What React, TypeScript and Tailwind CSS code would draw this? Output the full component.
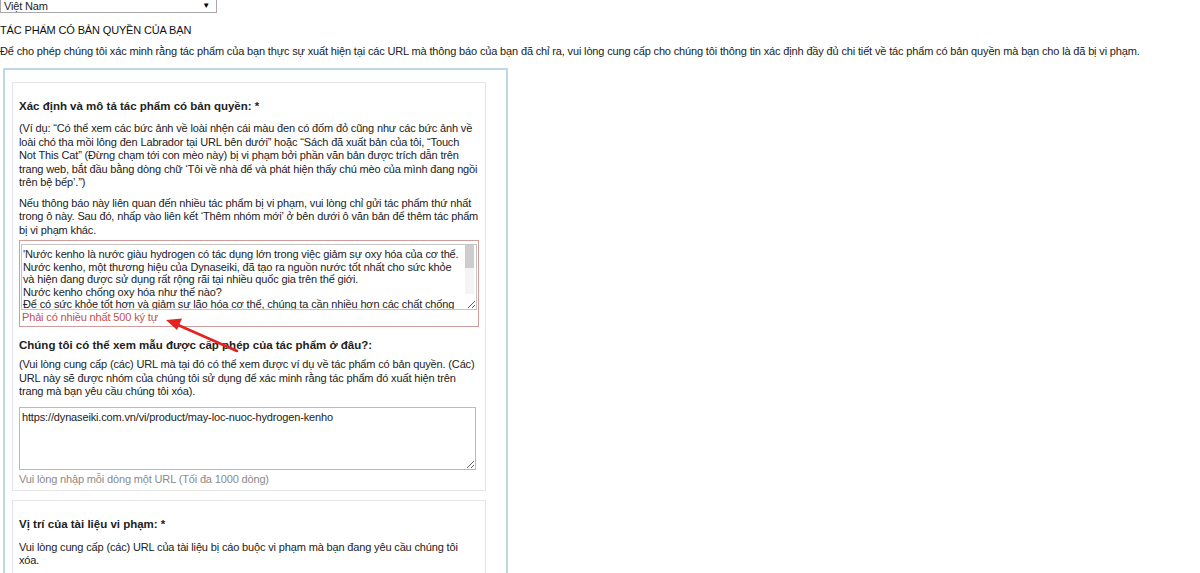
import { useState } from "react";

const TEXT_1 =
  "'Nước kenho là nước giàu hydrogen có tác dụng lớn trong việc giảm sự oxy hóa của cơ thể.\nNước kenho, một thương hiệu của Dynaseiki, đã tạo ra nguồn nước tốt nhất cho sức khỏe và hiện đang được sử dụng rất rộng rãi tại nhiều quốc gia trên thế giới.\nNước kenho chống oxy hóa như thế nào?\nĐể có sức khỏe tốt hơn và giảm sự lão hóa cơ thể, chúng ta cần nhiều hơn các chất chống oxy hóa. Hydrogen là chất chống oxy hóa tự nhiên và an toàn nhất.";

function RedArrow() {
  return (
    <svg
      className="absolute left-0 top-0 pointer-events-none"
      width="300"
      height="400"
      viewBox="0 0 300 400"
    >
      <line x1="237" y1="351" x2="178" y2="325" stroke="#e3231f" strokeWidth="2.6" strokeLinecap="round" />
      <polygon points="166,320 182,318.5 177,330" fill="#e3231f" />
    </svg>
  );
}

export default function App() {
  const [desc, setDesc] = useState(TEXT_1);
  const [urls, setUrls] = useState("https://dynaseiki.com.vn/vi/product/may-loc-nuoc-hydrogen-kenho");

  return (
    <div className="relative min-h-[573px] bg-white text-[11px] tracking-[-0.15px] text-[#222] font-['Liberation_Sans',Arial,sans-serif] overflow-hidden">
      {/* Country select */}
      <div className="w-[217px] h-[13px] border border-t-0 border-[#a9a9a9] bg-white flex items-center justify-between pl-[3px] pr-[6px]">
        <span className="leading-[12px]">Việt Nam</span>
        <span className="text-[8px] leading-[12px] text-black">▼</span>
      </div>

      <h3 className="mt-[10px] leading-[14px] text-[#111]">TÁC PHẨM CÓ BẢN QUYỀN CỦA BẠN</h3>
      <p className="mt-[7px] leading-[14px] whitespace-nowrap">
        Để cho phép chúng tôi xác minh rằng tác phẩm của bạn thực sự xuất hiện tại các URL mà thông báo của bạn đã chỉ ra, vui lòng cung cấp cho chúng tôi thông tin xác định đầy đủ chi tiết về tác phẩm có bản quyền mà bạn cho là đã bị vi phạm.
      </p>

      {/* Outer bordered panel */}
      <div className="ml-[3px] mt-[10px] w-[505px] border-2 border-b-0 border-[#bcd8e5] pl-[7px] pt-[12px] pb-[40px]">
        {/* Card 1 */}
        <div className="w-[474px] border border-[#e6e6e6] px-[6px] pt-[16px] pb-[4px]">
          <div className="font-bold text-[11.5px] tracking-normal leading-[14px] text-[#222]">Xác định và mô tả tác phẩm có bản quyền: *</div>
          <p className="mt-[9px] leading-[13.5px]">
            (Ví dụ: “Có thể xem các bức ảnh về loài nhện cái màu đen có đốm đỏ cũng như các bức ảnh về
            <br />
            loài chó tha mồi lông đen Labrador tại URL bên dưới” hoặc “Sách đã xuất bản của tôi, “Touch
            <br />
            Not This Cat” (Đừng chạm tới con mèo này) bị vi phạm bởi phần văn bản được trích dẫn trên
            <br />
            trang web, bắt đầu bằng dòng chữ ‘Tôi về nhà để và phát hiện thấy chú mèo của mình đang ngồi
            <br />
            trên bệ bếp’.”)
          </p>
          <p className="mt-[7px] leading-[13.5px]">
            Nếu thông báo này liên quan đến nhiều tác phẩm bị vi phạm, vui lòng chỉ gửi tác phẩm thứ nhất trong ô này. Sau đó, nhấp vào liên kết ‘Thêm nhóm mới’ ở bên dưới ô văn bản để thêm tác phẩm bị vi phạm khác.
          </p>

          {/* Error-state field */}
          <div className="mt-[3px] w-[460px] border border-[#d09d9d] px-[1px] pt-[3px] pb-[2px]">
            <div className="relative">
              <textarea
                value={desc}
                onChange={(e) => setDesc(e.target.value)}
                className="block w-[456px] h-[66px] border border-[#c4c4c4] pl-[1px] pr-[14px] pt-[3px] leading-[12.6px] text-[11px] tracking-[-0.15px] text-[#222] overflow-hidden outline-none font-['Liberation_Sans',Arial,sans-serif]"
              />
              {/* scrollbar */}
              <div className="absolute right-[3px] top-[1px] bottom-[16px] w-[9px] bg-[#f4f4f4]">
                <div className="h-[23px] bg-[#cdcdcd]" />
              </div>
            </div>
            <div className="leading-[14px] pl-[1px] text-[#c0504d]">Phải có nhiều nhất 500 ký tự</div>
          </div>

          <div className="mt-[11px] font-bold text-[11.5px] tracking-normal leading-[14px] text-[#222]">
            Chúng tôi có thể xem mẫu được cấp phép của tác phẩm ở đâu?:
          </div>
          <p className="mt-[6px] leading-[13.5px]">
            (Vui lòng cung cấp (các) URL mà tại đó có thể xem được ví dụ về tác phẩm có bản quyền. (Các) URL này sẽ được nhóm của chúng tôi sử dụng để xác minh rằng tác phẩm đó xuất hiện trên trang mà bạn yêu cầu chúng tôi xóa).
          </p>
          <textarea
            value={urls}
            onChange={(e) => setUrls(e.target.value)}
            className="mt-[8px] block w-[457px] h-[63px] border border-[#b9b9b9] px-[2px] pt-[3px] leading-[13px] text-[11px] tracking-[-0.15px] text-[#222] outline-none overflow-hidden font-['Liberation_Sans',Arial,sans-serif]"
          />
          <div className="mt-[2px] leading-[14px] text-[#8a8a8a]">Vui lòng nhập mỗi dòng một URL (Tối đa 1000 dòng)</div>
        </div>

        {/* Card 2 */}
        <div className="mt-[9px] w-[474px] border border-[#e6e6e6] px-[6px] pt-[16px] pb-[20px]">
          <div className="font-bold text-[11.5px] tracking-normal leading-[14px] text-[#222]">Vị trí của tài liệu vi phạm: *</div>
          <p className="mt-[10px] leading-[13.5px]">
            Vui lòng cung cấp (các) URL của tài liệu bị cáo buộc vi phạm mà bạn đang yêu cầu chúng tôi xóa.
          </p>
        </div>
      </div>

      <RedArrow />
    </div>
  );
}
